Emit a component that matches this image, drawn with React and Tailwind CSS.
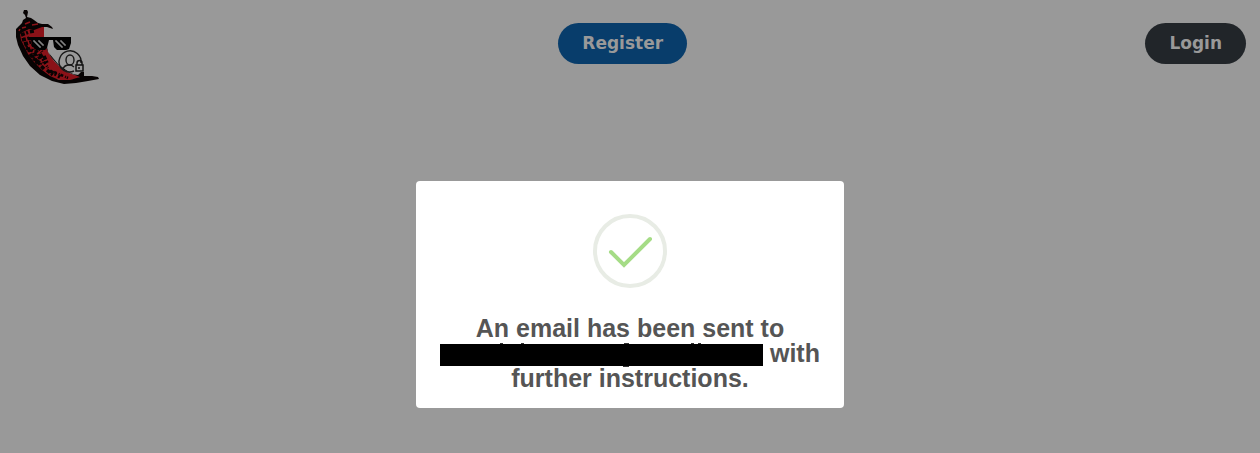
function Logo() {
  return (
    <svg viewBox="0 0 86 76" className="h-[76px] w-[86px]" role="img" aria-label="Pepper logo">
      <path d="M3 20 L8 16 L30 17 L30 28 L32 38 L35 45 L40 52 L46 58 L53 63 L60 66 L68 67 L62 70 L52 72 L40 70 L28 64 L17 54 L9 43 L4 32 Z" fill="#8a1218" />
      <path d="M2 20 L5 17 L8 14 L9 11 L12 9 L11 6 L9 4 L10 1 L13 1 L14 3 L13 8 L17 9 L20 11 L24 14 L28 15 L34 15 L38 18 L39 20 L33 18 L28 18 L20 21 L15 20 L9 23 L6 25 L7 31 L10 37 L14 45 L20 53 L28 61 L36 67 L45 71 L56 71 L66 68 L58 65 L50 61 L43 55 L37 48 L33 41 L31 28 L34 43 L44 55 L52 61 L59 65 L64 66 L67 63 L70 63 L70 67 L78 67 L84 68 L85 70 L74 72 L62 74 L50 75 L38 72 L26 66 L16 57 L9 47 L4 36 L2 28 Z" fill="#070303" />
      <path d="M11 15 L16 13 M18 16 L24 15 M8 19 L12 18 M6 20 L5 22" stroke="#8a1218" strokeWidth="1.5" fill="none" />
      <path d="M7 26 L15 23 L20 22 M8 31 L16 29 M10 35 L17 33 M12 39 L19 42 L23 48 M16 45 L21 51 L28 55 M21 50 L30 60 M26 45 L30 51 M24 38 L28 43 M33 61 L39 66 M36 62 L46 68 M30 47 L33 54" fill="none" stroke="#070303" strokeWidth="3.5" strokeDasharray="4 1.5 2 2" />
      <path d="M18 35 L26 51 M12 34 L24 57 M40 63 L54 69 M9 29 L15 43 M22 41 L34 59" fill="none" stroke="#070303" strokeWidth="2.5" strokeDasharray="3 2 1 1" />
      <path d="M15 28 H57 V34 L55 40 L52 41 H43 L40 38 L39 31 H35 L33 39 L31 41 H22 L18 37 L17 31 H15 Z" fill="#020202" />
      <path d="M20 31v2h2v2h2v2h2v2M25 31v2h2v2h2v2M42 31v2h2v2h2v2h2v2M47 31v2h2v2h2v2" fill="none" stroke="#aaa" strokeWidth="1" />
      <path d="M60 62 A11 11 0 0 1 47 59 A11 11 0 1 1 67 54 M49 60 C50 57 52 56 55 56 H57 L60 58" fill="none" stroke="#181818" strokeWidth="1.4" />
      <ellipse cx="56" cy="51" rx="4" ry="5" fill="none" stroke="#181818" strokeWidth="1.4" />
      <path d="M63 56v-2a2.5 2.5 0 0 1 5 0v2M62 56h7v6h-7z M65 58v2" fill="none" stroke="#111" strokeWidth="1.5" />
    </svg>
  );
}

function RedactedAddress() {
  return (
    <svg viewBox="0 0 323 22" className="inline-block h-[22px] w-[323px] overflow-visible align-bottom" role="img" aria-label="Redacted address">
      <path d="M0 0h323v22H0z" fill="#000" />
      <path d="M60 -1h3v1h-3zM81 -1h3v1h-3zM184 -1h5v1h-5zM251 -1h3v1h-3zM258 -1h3v1h-3zM183 22h6v1h-6z" fill="#333" />
    </svg>
  );
}

export default function App() {
  return (
    <div className="flex min-h-screen flex-col bg-[#999999] font-['Liberation_Sans',sans-serif]">
      <header className="flex items-start justify-between px-3.5 pt-[9px]">
        <Logo />
        <button className="mt-3.5 h-[41px] rounded-full bg-[#083d6b] px-6 font-['DejaVu_Sans',sans-serif] text-[17px] font-bold text-[#999999]">
          Register
        </button>
        <button className="mt-3.5 h-[41px] rounded-full bg-[#212529] px-6 font-['DejaVu_Sans',sans-serif] text-[17px] font-bold text-[#999999]">
          Login
        </button>
      </header>
      <main className="flex justify-center px-4 pt-24">
        <section role="dialog" aria-labelledby="message" className="flex w-full max-w-[428px] flex-col items-center rounded bg-white px-5 pt-[33px] pb-[17px]">
          <svg viewBox="0 0 74 74" className="size-[74px]" fill="none" aria-hidden="true">
            <circle cx="37" cy="37" r="35" stroke="#e8ece5" strokeWidth="4" />
            <path d="M18 38 L31 51 L57 25" stroke="#a5dc86" strokeWidth="4" strokeLinecap="round" />
          </svg>
          <h2 id="message" className="mt-7 text-center text-[25px] leading-[25px] font-bold text-[#555555]">
            An email has been sent to <RedactedAddress /> with further instructions.
          </h2>
        </section>
      </main>
    </div>
  );
}
